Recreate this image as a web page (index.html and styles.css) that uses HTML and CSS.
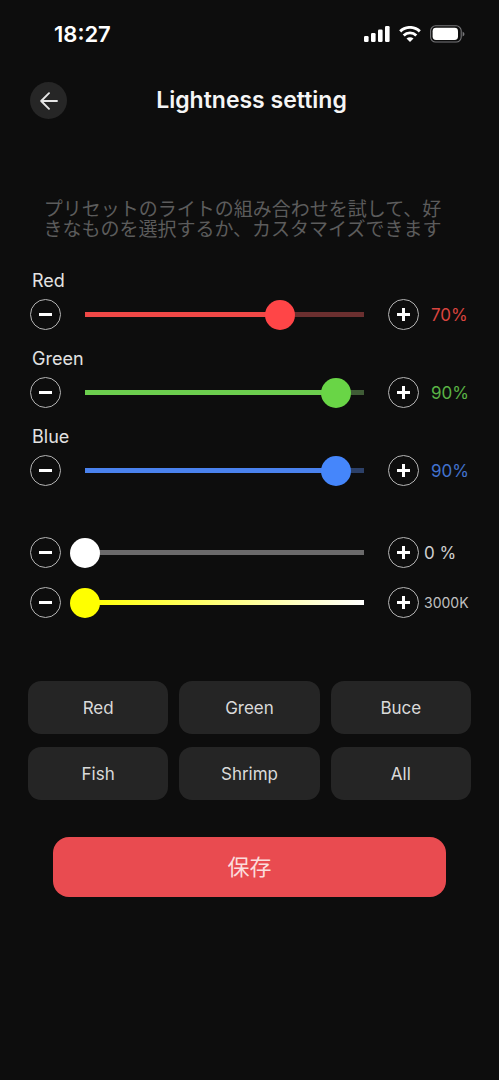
FILE: index.html
```html
<!DOCTYPE html>
<html lang="ja">
<head>
<meta charset="utf-8">
<meta name="viewport" content="width=device-width, initial-scale=1">
<title>Lightness setting</title>
<link rel="stylesheet" href="styles.css">
</head>
<body>
<div class="app">
  <div class="status">
    <span class="clock">18:27</span>
    <div class="status-icons">
      <svg class="signal" width="26" height="16" viewBox="0 0 26 16" aria-hidden="true">
        <rect x="0" y="10" width="4.6" height="6" rx="1.2"/>
        <rect x="7" y="7" width="4.6" height="9" rx="1.2"/>
        <rect x="14" y="3.5" width="4.6" height="12.5" rx="1.2"/>
        <rect x="21" y="0" width="4.6" height="16" rx="1.2"/>
      </svg>
      <svg class="wifi" width="22" height="16" viewBox="0 0 22 16" aria-hidden="true">
        <path d="M1.2 5.4a14 14 0 0 1 19.6 0" fill="none" stroke="#fff" stroke-width="2.9"/>
        <path d="M4.7 9.5a8.8 8.8 0 0 1 12.6 0" fill="none" stroke="#fff" stroke-width="2.8"/>
        <path d="M11 16l-3.5-3.4a5 5 0 0 1 7 0z" fill="#fff"/>
      </svg>
      <svg class="battery" width="35" height="18" viewBox="0 0 35 18" aria-hidden="true">
        <rect x="0.6" y="0.8" width="30.6" height="16.2" rx="5" fill="none" stroke="#77777a" stroke-width="1.1"/>
        <rect x="2.6" y="2.8" width="25.4" height="12.2" rx="3.4" fill="#fff"/>
        <path d="M32.6 6.4q1.9 1 1.9 2.6t-1.9 2.6z" fill="#77777a"/>
      </svg>
    </div>
  </div>

  <header class="header">
    <button class="back" type="button" aria-label="戻る">
      <svg width="18" height="18" viewBox="0 0 18 18" aria-hidden="true">
        <path d="M17 9H1.4M9 1.2L1.2 9 9 16.8" fill="none" stroke="#e6e6e6" stroke-width="1.9" stroke-linecap="round" stroke-linejoin="round"/>
      </svg>
    </button>
    <h1 class="title">Lightness setting</h1>
  </header>

  <main>
    <p class="intro">プリセットのライトの組み合わせを試して、好きなものを選択するか、カスタマイズできます</p>

    <section class="channels">
      <div class="channel red">
        <label class="name" for="red">Red</label>
        <div class="row">
          <button class="step minus" type="button" aria-label="Red −"></button>
          <input class="slider" id="red" type="range" min="0" max="100" value="70" style="--value: 70%">
          <button class="step plus" type="button" aria-label="Red +"></button>
          <output class="value" for="red">70%</output>
        </div>
      </div>
      <div class="channel green">
        <label class="name" for="green">Green</label>
        <div class="row">
          <button class="step minus" type="button" aria-label="Green −"></button>
          <input class="slider" id="green" type="range" min="0" max="100" value="90" style="--value: 90%">
          <button class="step plus" type="button" aria-label="Green +"></button>
          <output class="value" for="green">90%</output>
        </div>
      </div>
      <div class="channel blue">
        <label class="name" for="blue">Blue</label>
        <div class="row">
          <button class="step minus" type="button" aria-label="Blue −"></button>
          <input class="slider" id="blue" type="range" min="0" max="100" value="90" style="--value: 90%">
          <button class="step plus" type="button" aria-label="Blue +"></button>
          <output class="value" for="blue">90%</output>
        </div>
      </div>
    </section>

    <section class="whites">
      <div class="row white">
        <button class="step minus" type="button" aria-label="White −"></button>
        <input class="slider" id="white" type="range" min="0" max="100" value="0" style="--value: 0%" aria-label="White">
        <button class="step plus" type="button" aria-label="White +"></button>
        <output class="value near" for="white">0 %</output>
      </div>
      <div class="row warm">
        <button class="step minus" type="button" aria-label="Temperature −"></button>
        <input class="slider" id="warm" type="range" min="3000" max="10000" value="3000" aria-label="Temperature">
        <button class="step plus" type="button" aria-label="Temperature +"></button>
        <output class="value near small" for="warm">3000K</output>
      </div>
    </section>

    <div class="presets">
      <button class="preset" type="button">Red</button>
      <button class="preset" type="button">Green</button>
      <button class="preset" type="button">Buce</button>
      <button class="preset" type="button">Fish</button>
      <button class="preset" type="button">Shrimp</button>
      <button class="preset" type="button">All</button>
    </div>

    <button class="save" type="button">保存</button>
  </main>
</div>
</body>
</html>
```
FILE: styles.css
```css
* {
  box-sizing: border-box;
}

body {
  margin: 0;
  background: #fff;
  font-family: Inter, "Noto Sans CJK JP", sans-serif;
}

button {
  border: 0;
  padding: 0;
  font-family: inherit;
}

.app {
  min-height: 100vh;
  margin-right: 1px;
  padding-bottom: 40px;
  background: #0d0d0d;
  color: #e2e2e2;
}

.status {
  display: flex;
  align-items: center;
  justify-content: space-between;
  height: 68px;
  padding: 0 34px 0 54px;
}

.clock {
  color: #fff;
  font-size: 22px;
  font-weight: 600;
}

.status-icons {
  display: flex;
  align-items: center;
  gap: 9px;
}

.signal {
  fill: #fff;
}

.header {
  display: grid;
  grid-template-columns: 37px 1fr 33px;
  align-items: center;
  margin-top: 14px;
  padding: 0 30px;
}

.back {
  display: flex;
  align-items: center;
  justify-content: center;
  width: 37px;
  height: 37px;
  border-radius: 50%;
  background: #262626;
}

.title {
  margin: 0;
  padding-bottom: 2px;
  color: #f5f5f5;
  font-size: 23px;
  font-weight: 600;
  line-height: 28px;
  text-align: center;
}

.intro {
  margin: 79px 52px 31px 38px;
  color: #5c5c5c;
  font-family: "Noto Sans CJK JP", sans-serif;
  font-size: 19px;
  font-weight: 400;
  line-height: 20px;
  text-align: center;
}

.channels {
  display: grid;
  gap: 17px;
  padding: 0 30px;
}

.channel {
  display: grid;
  gap: 6px;
}

.name {
  padding-left: 2px;
  font-size: 18px;
  line-height: 24px;
}

.whites {
  display: grid;
  gap: 19px;
  margin-top: 51px;
  padding: 0 30px;
}

.row {
  display: flex;
  align-items: center;
}

.step {
  flex: none;
  width: 31px;
  height: 31px;
  border: 1px solid #b4b4b4;
  border-radius: 50%;
  background: linear-gradient(#fff, #fff) center / 13px 3px no-repeat;
}

.plus {
  background:
    linear-gradient(#fff, #fff) center / 13px 3px no-repeat,
    linear-gradient(#fff, #fff) center / 3px 13px no-repeat;
}

.slider {
  --track: linear-gradient(to right, var(--fill) var(--value), var(--rest) var(--value));
  flex: 1;
  min-width: 0;
  height: 30px;
  margin: 0 9px;
  -webkit-appearance: none;
  appearance: none;
  background: none;
}

.slider::-webkit-slider-runnable-track {
  height: 30px;
  background: var(--track) center / calc(100% - 30px) 5px no-repeat;
}

.slider::-webkit-slider-thumb {
  -webkit-appearance: none;
  appearance: none;
  width: 30px;
  height: 30px;
  border-radius: 50%;
  background: var(--thumb);
}

.value {
  width: 50px;
  padding-left: 12px;
  color: var(--text);
  font-size: 17px;
  line-height: 24px;
  white-space: nowrap;
}

.near {
  padding-left: 5px;
}

.small {
  font-size: 14px;
}

.red {
  --fill: #f04846;
  --rest: #6b2f2f;
  --thumb: #ff4547;
  --text: #d9443f;
}

.green {
  --fill: #6cce4e;
  --rest: #3f5c36;
  --thumb: #69d546;
  --text: #5ab345;
}

.blue {
  --fill: #4a82ee;
  --rest: #2c4068;
  --thumb: #4586fb;
  --text: #4272ce;
}

.white {
  --fill: #fff;
  --rest: #6b6a6b;
  --thumb: #fff;
  --text: #d0d0d0;
}

.warm {
  --thumb: #ff0;
  --text: #c0c0c0;
}

.warm .slider {
  --track: linear-gradient(to right, #ff0, #fff);
}

.presets {
  display: grid;
  grid-template-columns: repeat(3, 1fr);
  gap: 13px 11px;
  margin: 63px 28px 0;
}

.preset {
  height: 53px;
  border-radius: 13px;
  background: #252525;
  color: #dadada;
  font-size: 17px;
}

.save {
  display: block;
  width: calc(100% - 106px);
  height: 60px;
  margin: 37px auto 0;
  padding-bottom: 4px;
  border-radius: 16px;
  background: #e94b50;
  color: #fbdcdc;
  font-family: "Noto Sans CJK JP", sans-serif;
  font-size: 22px;
  font-weight: 400;
}
```
